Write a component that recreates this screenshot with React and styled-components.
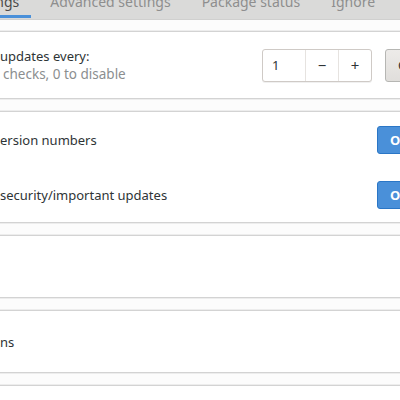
import React from "react";
import styled, { createGlobalStyle } from "styled-components";

const GlobalStyle = createGlobalStyle`
  html, body {
    margin: 0;
    padding: 0;
    background: #fcfcfc;
    overflow: hidden;
  }
  body {
    font-family: "Noto Sans", "DejaVu Sans", sans-serif;
    font-size: 13px;
    color: #2e3436;
  }
`;

const tabs = [
  { label: "Settings", active: true },
  { label: "Advanced settings" },
  { label: "Package status" },
  { label: "Ignore" },
];

export default function App() {
  return (
    <>
      <GlobalStyle />
      <Page>
        <TabBar>
          {tabs.map((t) => (
            <Tab key={t.label} active={t.active}>
              {t.label}
            </Tab>
          ))}
        </TabBar>
        <Content>
          <Frame>
            <Row height={66}>
              <LabelBlock>
                <Label>updates every:</Label>
                <SubLabel>checks, 0 to disable</SubLabel>
              </LabelBlock>
              <SpinButton>
                <SpinEntry>1</SpinEntry>
                <SpinStep>−</SpinStep>
                <SpinStep>+</SpinStep>
              </SpinButton>
              <Button>Check now</Button>
            </Row>
          </Frame>
          <Frame>
            <Row height={55}>
              <Label>ersion numbers</Label>
              <Switch>
                <SwitchText>ON</SwitchText>
                <SwitchKnob />
              </Switch>
            </Row>
            <Row height={55}>
              <Label>security/important updates</Label>
              <Switch>
                <SwitchText>ON</SwitchText>
                <SwitchKnob />
              </Switch>
            </Row>
          </Frame>
          <Frame>
            <Row height={61} />
          </Frame>
          <Frame>
            <Row height={61}>
              <Label>ns</Label>
            </Row>
          </Frame>
          <Frame>
            <Row height={61} />
          </Frame>
        </Content>
      </Page>
    </>
  );
}

const Page = styled.div`
  width: 480px;
  height: 400px;
  overflow: hidden;
`;

const TabBar = styled.div`
  display: flex;
  gap: 7px;
  height: 30px;
  margin-top: -12px;
  margin-left: -46px;
  padding-bottom: 1px;
  background-color: #dadad9;
  border-bottom: 1px solid #d0d0cf;
`;

const Tab = styled.div`
  display: flex;
  align-items: center;
  padding: 0 12px;
  border-bottom: 3px solid ${(p) => (p.active ? "#4a90d9" : "transparent")};
  color: ${(p) => (p.active ? "#4a4a4a" : "#8e8e8e")};
  font-size: 14px;
  white-space: nowrap;
`;

const Content = styled.div`
  display: flex;
  flex-direction: column;
  gap: 12px;
  padding-top: 11px;
`;

const Frame = styled.div`
  background-color: #ffffff;
  border-top: 1px solid #d3d3d3;
  border-bottom: 1px solid #d3d3d3;
  box-shadow: 0 1px 0 #ededed, 0 -1px 0 #ededed;
`;

const Row = styled.div`
  display: flex;
  align-items: center;
  height: ${(p) => p.height}px;
  padding-right: 12px;
`;

const LabelBlock = styled.div`
  display: flex;
  flex-direction: column;
  flex: 1;
  gap: 0;
`;

const Label = styled.div`
  flex: 1;
  font-size: 13px;
  color: #2e3436;
`;

const SubLabel = styled.div`
  font-size: 13.5px;
  color: #8b8e8f;
  padding-left: 3px;
`;

const SpinButton = styled.div`
  display: flex;
  width: 110px;
  height: 33px;
  box-sizing: border-box;
  border: 1px solid #cfcac6;
  border-radius: 3px;
  background-color: #ffffff;
  box-shadow: 0 1px 0 #f0f0f0;
`;

const SpinEntry = styled.div`
  flex: 1;
  display: flex;
  align-items: center;
  padding-left: 9px;
  font-size: 13px;
  color: #2e3436;
`;

const SpinStep = styled.div`
  width: 32px;
  display: flex;
  align-items: center;
  justify-content: center;
  border-left: 1px solid #e6e3e0;
  font-size: 15px;
  color: #2e3436;
`;

const Button = styled.div`
  display: flex;
  align-items: center;
  width: 83px;
  height: 33px;
  margin-left: 13px;
  box-sizing: border-box;
  padding-left: 12px;
  border: 1px solid #b6b6b3;
  border-radius: 3px;
  background: linear-gradient(#edebe9, #e0dedb);
  color: #2e3436;
  font-size: 13px;
  white-space: nowrap;
`;

const Switch = styled.div`
  display: flex;
  align-items: center;
  width: 91px;
  height: 28px;
  box-sizing: border-box;
  border: 1px solid #2a76c6;
  border-radius: 3px;
  background-color: #4a90d9;
`;

const SwitchText = styled.div`
  flex: 1;
  padding-left: 12px;
  color: #ffffff;
  font-size: 13px;
  font-weight: bold;
`;

const SwitchKnob = styled.div`
  width: 44px;
  height: 26px;
  box-sizing: border-box;
  border: 1px solid #a8a8a6;
  border-radius: 3px;
  background: linear-gradient(#f4f4f3, #e8e8e7);
`;
